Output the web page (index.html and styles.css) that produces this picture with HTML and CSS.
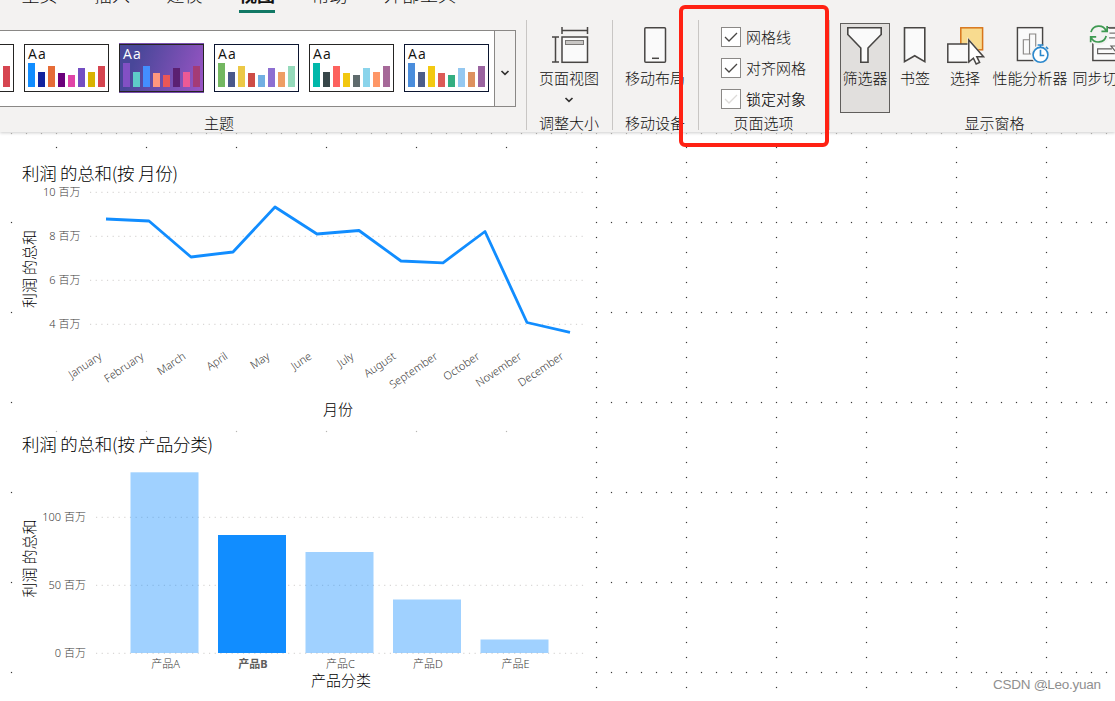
FILE: index.html
```html
<!DOCTYPE html>
<html lang="zh-CN">
<head>
  <meta charset="UTF-8">
  <meta name="viewport" content="width=device-width, initial-scale=1.0">
  <title>Power BI - 视图</title>
  <link rel="stylesheet" href="styles.css">
</head>
<body>
  <header class="ribbon">
    <nav class="tabs">
      <span class="tab">主页</span>
      <span class="tab">插入</span>
      <span class="tab">建模</span>
      <span class="tab active">视图</span>
      <span class="tab">帮助</span>
      <span class="tab">外部工具</span>
    </nav>

    <div class="groups">
      <section class="group group-theme">
        <div class="gallery">
          <div class="themes" id="themes"></div>
          <button class="gallery-more">
            <svg width="10" height="6" viewBox="0 0 10 6"><path d="M1.5 1 L5 4.3 L8.5 1" fill="none" stroke="#323130" stroke-width="1.7"/></svg>
          </button>
        </div>
        <div class="group-name">主题</div>
      </section>

      <section class="group group-size">
        <div class="tools">
          <div class="tool">
            <svg width="40" height="40" viewBox="548 25 40 40" fill="none" stroke="#484644" stroke-width="1.5">
              <path d="M561 30.5 H587 M561 27 V34 M586.5 27 V34"/>
              <path d="M554.5 37 V62 M551 37 H558 M551 62 H558"/>
              <rect x="561" y="37" width="25.5" height="25.3" fill="#fafafa"/>
              <rect x="564.5" y="40.5" width="18" height="4" fill="#c8c6c4" stroke="#797775" stroke-width="1"/>
            </svg>
            <span>页面视图</span>
            <svg class="caret" width="10" height="6" viewBox="0 0 10 6"><path d="M1.5 1 L5 4.3 L8.5 1" fill="none" stroke="#323130" stroke-width="1.7"/></svg>
          </div>
        </div>
        <div class="group-name">调整大小</div>
      </section>

      <section class="group group-mobile">
        <div class="tools">
          <div class="tool">
            <svg width="40" height="40" viewBox="634 25 40 40" fill="none" stroke="#484644" stroke-width="1.5">
              <rect x="643.8" y="27.8" width="20.7" height="34.5" rx="1" fill="#fafafa"/>
              <path d="M651 58.3 H658"/>
            </svg>
            <span>移动布局</span>
          </div>
        </div>
        <div class="group-name">移动设备</div>
      </section>

      <section class="group group-options">
        <div class="checks">
          <div class="check"><i class="box"><svg width="18" height="18" viewBox="0 0 18 18"><path d="M3 9 L7 13 L15 5"/></svg></i>网格线</div>
          <div class="check"><i class="box"><svg width="18" height="18" viewBox="0 0 18 18"><path d="M3 9 L7 13 L15 5"/></svg></i>对齐网格</div>
          <div class="check off"><i class="box"><svg width="18" height="18" viewBox="0 0 18 18"><path d="M3 9 L7 13 L15 5"/></svg></i>锁定对象</div>
        </div>
        <div class="group-name">页面选项</div>
        <div class="highlight"></div>
      </section>

      <section class="group group-panes">
        <div class="tools">
          <div class="tool narrow selected">
            <svg width="40" height="40" viewBox="845 25 40 40" fill="#fafafa" stroke="#484644" stroke-width="1.6">
              <path d="M847.8 27.8 H881.2 V34.5 L868 48 V62.2 H860.8 V48 L847.8 34.5 Z"/>
            </svg>
            <span>筛选器</span>
          </div>
          <div class="tool narrow">
            <svg width="40" height="40" viewBox="894.5 25 40 40" fill="#fafafa" stroke="#484644" stroke-width="1.6">
              <path d="M904 27.8 H924.3 V61.7 L914.2 55.8 L904 61.7 Z"/>
            </svg>
            <span>书签</span>
          </div>
          <div class="tool narrow">
            <svg width="40" height="40" viewBox="945 25 40 40" stroke-width="1.5">
              <rect x="960.8" y="27.8" width="21.8" height="22" fill="#f8db8f" stroke="#d8761b"/>
              <rect x="947.8" y="44" width="21" height="18.3" fill="#fafafa" stroke="#484644"/>
              <path d="M967.5 37 L985.5 58 H979 L981.5 63 L976 66 L973 60 L967.5 64 Z" fill="#f3f2f1"/>
              <path d="M968.8 40 L983.5 56.7 H976.8 L979.6 62.4 L976.2 64 L973.4 58.2 L968.8 62 Z" fill="#fff" stroke="#484644"/>
            </svg>
            <span>选择</span>
          </div>
          <div class="tool wide">
            <svg width="50" height="42" viewBox="1005 25 50 42" fill="none" stroke="#484644" stroke-width="1.5">
              <rect x="1016.8" y="27.8" width="26.4" height="34.5" fill="#fafafa"/>
              <path d="M1023 55.5 V40.5 H1029.5 V55.5 Z M1029.5 55.5 V34.5 H1036 V55.5 Z" stroke="#8a8886" stroke-width="1.2"/>
              <circle cx="1041" cy="56" r="10" fill="#f3f2f1" stroke="none"/>
              <circle cx="1041" cy="56.3" r="7.8" fill="#fff" stroke="#2b88cc" stroke-width="1.7"/>
              <path d="M1038 46 H1044 M1041 46 V48.5 M1046.8 48 L1049 50.2 M1041 51 V57 H1045" stroke="#2b88cc" stroke-width="1.7"/>
            </svg>
            <span>性能分析器</span>
          </div>
          <div class="tool wide">
            <svg width="50" height="42" viewBox="1086 25 50 42" fill="none" stroke="#484644" stroke-width="1.5">
              <rect x="1093" y="27.8" width="34" height="34.5" fill="#fafafa"/>
              <path d="M1110 28.5 H1124 M1110 33.5 H1124 M1110 38.5 H1124" stroke="#797775"/>
              <circle cx="1099" cy="34.5" r="11.5" fill="#f3f2f1" stroke="none"/>
              <path d="M1091 32.5 A8.5 8.5 0 0 1 1107 31.2 M1107 36.5 A8.5 8.5 0 0 1 1091.2 38.2 M1108 26 V31.7 H1102 M1090.7 43 V37.5 H1096.5" stroke="#3f9a52" stroke-width="1.8"/>
              <path d="M1113 50 H1098 V55 H1116 M1112 47 H1122 L1117 53 Z" stroke="#605e5c" stroke-width="1.2"/>
            </svg>
            <span>同步切片器</span>
          </div>
        </div>
        <div class="group-name">显示窗格</div>
      </section>
    </div>
  </header>

  <main class="canvas">
    <svg class="report" width="1115" height="568" viewBox="0 133 1115 568">
      <g class="grid" id="grid"></g>

      <!-- 折线图 -->
      <g class="visual">
        <text class="title" x="22" y="180" textLength="156">利润 的总和(按 月份)</text>
        <path class="rule" d="M90 192.3 H587 M90 236.3 H587 M90 280.3 H587 M90 324.3 H587"/>
        <g class="axis end">
          <text x="80.5" y="196">10 百万</text>
          <text x="80.5" y="240">8 百万</text>
          <text x="80.5" y="284">6 百万</text>
          <text x="80.5" y="328">4 百万</text>
        </g>
        <text class="axis-title" transform="translate(34.5 308) rotate(-90)" textLength="78">利润 的总和</text>
        <polyline class="line" points="106,219 149,221 191,257 233,252 275,207 317,234 359,230.5 401,261 443,262.8 485,231.5 527,322.5 570,332.3"/>
        <g class="axis end" id="months"></g>
        <text class="axis-title" x="323" y="415" textLength="30">月份</text>
      </g>

      <!-- 柱形图 -->
      <g class="visual">
        <text class="title" x="22" y="451" textLength="191">利润 的总和(按 产品分类)</text>
        <path class="rule" d="M96 517.3 H587 M96 585.3 H587 M96 653.3 H587"/>
        <g class="axis end">
          <text x="86" y="521">100 百万</text>
          <text x="86" y="589">50 百万</text>
          <text x="86" y="657">0 百万</text>
        </g>
        <text class="axis-title" transform="translate(34.5 597.5) rotate(-90)" textLength="78">利润 的总和</text>
        <g class="columns">
          <rect x="130.5" y="472.3" width="68" height="180.7"/>
          <rect class="picked" x="218" y="535" width="68" height="118"/>
          <rect x="305.5" y="552" width="68" height="101"/>
          <rect x="393" y="599.5" width="68" height="53.5"/>
          <rect x="480.5" y="639.5" width="68" height="13.5"/>
        </g>
        <g class="axis mid">
          <text x="165.5" y="668">产品A</text>
          <text class="picked" x="253" y="668">产品B</text>
          <text x="340.5" y="668">产品C</text>
          <text x="428" y="668">产品D</text>
          <text x="515.5" y="668">产品E</text>
        </g>
        <text class="axis-title" x="311" y="685.5" textLength="60">产品分类</text>
      </g>

      <text class="watermark" x="993" y="689" textLength="108">CSDN @Leo.yuan</text>
    </svg>
  </main>

  <script>
    const heights = [24, 15, 21, 14, 12, 19, 15, 21];
    const themes = [
      { cls: '', colors: ['#118dff', '#12239e', '#e66c37', '#6b007b', '#e044a7', '#744ec2', '#d9b300', '#d64550'] },
      { cls: '', colors: ['#118dff', '#12239e', '#e66c37', '#6b007b', '#e044a7', '#744ec2', '#d9b300', '#d64550'] },
      { cls: 'dark', colors: ['#8250c4', '#5ecbc8', '#438fff', '#ff977e', '#eb5757', '#5b2071', '#ec5a96', '#a43b76'] },
      { cls: 'navy', colors: ['#73b761', '#4a588a', '#ecc846', '#cd4c46', '#71afe2', '#8d6fd1', '#ee9e64', '#95dabb'] },
      { cls: '', colors: ['#01b8aa', '#374649', '#fd625e', '#f2c80f', '#5f6b6d', '#8ad4eb', '#fe9666', '#a66999'] },
      { cls: 'navy', colors: ['#4a8ddc', '#4c5d8a', '#f3c911', '#dc5b57', '#33ae81', '#95c8f0', '#dd915f', '#9a64a0'] }
    ];
    document.getElementById('themes').innerHTML = themes.map(t => `
      <div class="theme ${t.cls}">
        <span>Aa</span>
        <div class="bars">${t.colors.map((c, i) => `<i style="height:${heights[i]}px;background:${c}"></i>`).join('')}</div>
      </div>`).join('');

    const months = ['January', 'February', 'March', 'April', 'May', 'June', 'July', 'August', 'September', 'October', 'November', 'December'];
    document.getElementById('months').innerHTML = months.map((m, i) =>
      `<text transform="translate(${102.5 + i * 42} 358) rotate(-34)">${m}</text>`).join('');

    // 网格点
    const dots = [];
    const dot = (x, y, cls) => dots.push(`<rect class="${cls || ''}" x="${x - 0.1}" y="${y - 0.1}" width="1.2" height="1.2"/>`);
    for (let x = 596; x < 1110; x += 90) {
      for (let y = 147; y < 700; y += 15) dot(x, y);
    }
    for (let y = 222; y < 700; y += 90) {
      dot(11, y);
      for (let x = 611; x < 1110; x += 15) if ((x - 596) % 90) dot(x, y);
    }
    for (let x = 56; x < 590; x += 90) {
      dot(x, 147);
      dot(x, 431, 'faint');
    }
    for (let x = 11; x < 1110; x += 15) dot(x, 133, 'faint');
    document.getElementById('grid').innerHTML = dots.join('');
  </script>
</body>
</html>
```
FILE: styles.css
```css
* {
  box-sizing: border-box;
}
body {
  margin: 0;
  width: 1115px;
  height: 701px;
  overflow: hidden;
  background: #fff;
  color: #11100f;
  font-family: "Noto Sans CJK SC", sans-serif;
  font-size: 15px;
  font-weight: 300;
}
.ribbon {
  position: relative;
  height: 132px;
  background: #f3f2f1;
  box-shadow: 0 1px 3px rgba(0,0,0,0.2);
}
.tabs {
  display: flex;
  gap: 36.5px;
  height: 20px;
  padding-left: 21.5px;
}
.tab {
  height: 13px;
  line-height: 18px;
  font-size: 18px;
  display: flex;
  align-items: flex-end;
  padding-bottom: 10px;
  white-space: nowrap;
}
.tab.active {
  font-weight: 700;
  border-bottom: 3px solid #117865;
  padding-bottom: 7px;
}
.groups {
  display: flex;
  height: 112px;
}
.group {
  flex: none;
  display: flex;
  flex-direction: column;
  align-items: center;
  height: 110px;
  border-right: 1px solid #c8c6c4;
}
.group-theme { width: 527px; padding-right: 88px; }
.group-size { width: 86px; padding-right: 1px; }
.group-mobile { width: 86px; padding-right: 1px; }
.group-options { width: 131px; padding-right: 1px; position: relative; }
.group-panes { width: 331px; padding-right: 2px; }
.group-name {
  margin-top: auto;
  height: 15px;
  line-height: 16px;
  white-space: nowrap;
}
.gallery {
  align-self: flex-start;
  display: flex;
  width: 516px;
  height: 77px;
  margin-top: 10px;
  border: 1px solid #8a8886;
  border-left: 0;
  background: #fff;
}
.themes {
  flex: 1;
  display: flex;
  gap: 10px;
  padding-top: 13px;
  overflow: hidden;
}
.theme {
  flex: none;
  width: 85px;
  height: 48px;
  padding: 2px 3px 4px;
  border: 1px solid #252423;
  display: flex;
  flex-direction: column;
}
.theme:first-child {
  margin-left: -71px;
}
.theme.navy {
  border-color: #0b1530;
}
.theme.dark {
  color: #fff;
  background: linear-gradient(110deg, #494799 20%, #9a55c5);
  box-shadow: 0 -1px #7a4fb0, 0 1px #7a4fb0;
}
.theme span {
  font: 14px/14px "Open Sans", sans-serif;
  letter-spacing: 1.2px;
}
.bars {
  display: flex;
  align-items: flex-end;
  gap: 3px;
  flex: 1;
}
.bars i {
  width: 7px;
}
.gallery-more {
  width: 21px;
  padding: 6px 1px 0 0;
  border: 0;
  border-left: 1px solid #8a8886;
  background: #f3f2f1;
}
.tools {
  display: flex;
  height: 90px;
  margin-top: 3px;
}
.tool {
  display: flex;
  flex-direction: column;
  align-items: center;
  white-space: nowrap;
  padding-top: 2px;
}
.tool span {
  height: 20px;
  line-height: 19px;
  margin-top: 3px;
}
.tool svg {
  flex: none;
  height: 40px;
}
.tool .caret {
  height: 6px;
  margin-top: 9px;
}
.tool.narrow { width: 50px; }
.tool.wide { width: 80px; }
.tool.selected {
  background: #e1dfdd;
  border: 1px solid #605e5c;
  padding-top: 1px;
}
.group-panes .tools {
  align-self: flex-start;
  margin-left: 10px;
}
.group-panes {
  border-right: 0;
}
.checks {
  align-self: flex-start;
  display: flex;
  flex-direction: column;
  gap: 11px;
  padding: 7px 0 0 22px;
}
.check {
  display: flex;
  align-items: center;
  gap: 5px;
  height: 20px;
  line-height: 20px;
}
.check.off {
  color: #000;
  -webkit-text-stroke: 0.1px #000;
}
.box {
  width: 20px;
  height: 20px;
  border: 1px solid #8a8886;
  background: #fff;
}
.box svg {
  display: block;
}
.box path {
  fill: none;
  stroke: #484644;
  stroke-width: 1.3;
}
.check.off .box path {
  stroke: #dddbd9;
}
.highlight {
  position: absolute;
  left: -20px;
  top: -15px;
  width: 150px;
  height: 142px;
  border: 4px solid #ff2113;
  border-radius: 6px;
}
.report {
  display: block;
  margin-top: 1px;
}
.grid rect {
  fill: #3b3a39;
}
.grid .faint {
  fill: #b8b6b4;
}
.title {
  font-size: 17.5px;
}
.axis-title {
  font-size: 15px;
}
.title,
.axis-title {
  fill: #000;
}
.axis {
  font-family: "Noto Sans", "Noto Sans CJK SC", sans-serif;
  font-size: 11px;
  fill: #3b3a39;
}
.end {
  text-anchor: end;
}
.mid {
  text-anchor: middle;
}
.axis .picked {
  font-weight: 700;
  fill: #605e5c;
}
.rule {
  fill: none;
  stroke: #d0cecc;
  stroke-width: 1;
  stroke-dasharray: 1.2 4.45;
}
.line {
  fill: none;
  stroke: #118dff;
  stroke-width: 2.8;
  stroke-linejoin: round;
}
.columns rect {
  fill: #118dff;
  fill-opacity: 0.4;
}
.columns .picked {
  fill-opacity: 1;
}
.watermark {
  font: 13.5px "Liberation Sans", sans-serif;
  fill: #8f8f8f;
}
```
